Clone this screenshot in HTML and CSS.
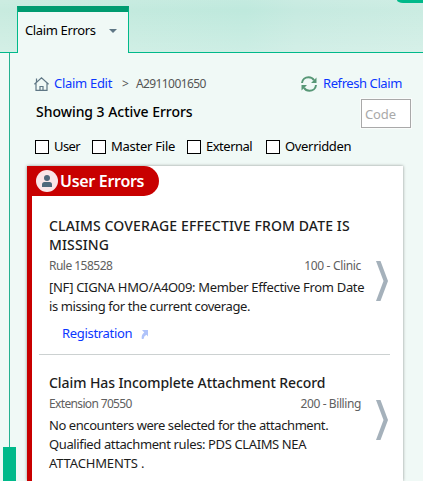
FILE: index.html
```html
<!DOCTYPE html>
<html lang="en">
<head>
<meta charset="utf-8">
<title>Claim Errors</title>
<link rel="stylesheet" href="styles.css">
</head>
<body>
<header class="tabs">
  <div class="tab"><span class="tab-label">Claim Errors</span><span class="caret"></span></div>
  <span class="corner"></span>
</header>
<div class="layout">
  <aside class="rail"><span class="rail-line"></span><span class="rail-thumb"></span></aside>
  <main class="main">
    <nav class="crumbs">
      <svg class="home" width="15" height="14" viewBox="0 0 15 14" fill="none" stroke="#5f7785" stroke-width="1.200"><path d="M.4 7.200 7.500.9l7.100 6.300M2 6v7.400h11V6M6 13.400V9.500h3v3.900M2.500 5V1.500"/></svg>
      <a class="link edit">Claim Edit</a>
      <span class="sep">&gt;</span>
      <span class="claim">A2911001650</span>
      <svg class="refresh" width="16" height="16" viewBox="0 0 16 16"><g fill="none" stroke="#579776" stroke-width="2"><path d="M1 7C1.300 3.300 4.300 1.200 7.500 1.200c2.400 0 4.400 1 5.500 3"/><path d="M15 9c-.3 3.700-3.300 5.800-6.500 5.800-2.400 0-4.400-1-5.500-3"/></g><path fill="#579776" d="M15.500 1.500V7H10zM.5 14.500V9H6z"/></svg>
      <a class="link reload">Refresh Claim</a>
    </nav>
    <div class="summary"><h1>Showing 3 Active Errors</h1><div class="code">Code</div></div>
    <div class="filters">
      <label><i class="box"></i><span class="f-user">User</span></label>
      <label><i class="box"></i><span class="f-master">Master File</span></label>
      <label><i class="box"></i><span class="f-external">External</span></label>
      <label><i class="box"></i><span class="f-over">Overridden</span></label>
    </div>
    <section class="card">
      <h2 class="pill">
        <svg width="22" height="22" viewBox="0 0 22 22"><circle cx="11" cy="11" r="11" fill="#fae6e8"/><circle cx="11" cy="8" r="3" fill="#4f687b"/><path fill="#4f687b" d="M6 17v-2.500q0-2.500 2.500-2.500h5q2.500 0 2.500 2.500V17z"/></svg>
        <span>User Errors</span>
      </h2>
      <article class="error first">
        <div class="text">
          <h3 class="t1">CLAIMS COVERAGE EFFECTIVE FROM DATE IS<br>MISSING</h3>
          <div class="meta"><span class="m1">Rule 158528</span><span class="m2">100 - Clinic</span></div>
          <p><span class="b1">[NF] CIGNA HMO/A4O09: Member Effective From Date</span><br><span class="b2">is missing for the current coverage.</span></p>
          <div class="action"><a class="link reg">Registration</a><svg class="jump" width="8" height="9" viewBox="0 0 8 9"><path d="M1 0h6v6.500L5.500 4.700Q3 5.500 2.500 9H.8Q0 4.700 3.300 2.500z" fill="#afc3fa"/></svg></div>
        </div>
        <svg class="chevron" width="13" height="40" viewBox="0 0 13 40"><path d="M0 0h4.500L12 20 4.500 40H0l7.500-20z" fill="#a5b1bb"/></svg>
      </article>
      <article class="error second">
        <div class="text">
          <h3 class="t2">Claim Has Incomplete Attachment Record</h3>
          <div class="meta"><span class="m3">Extension 70550</span><span class="m4">200 - Billing</span></div>
          <p><span class="b3">No encounters were selected for the attachment.</span><br><span class="b4">Qualified attachment rules: PDS CLAIMS NEA</span><br><span class="b5">ATTACHMENTS .</span></p>
        </div>
        <svg class="chevron" width="13" height="40" viewBox="0 0 13 40"><path d="M0 0h4.500L12 20 4.500 40H0l7.500-20z" fill="#a5b1bb"/></svg>
      </article>
    </section>
  </main>
</div>
</body>
</html>
```
FILE: styles.css
```css
* { box-sizing: border-box; }
body { margin: 0; width: 423px; height: 481px; overflow: hidden; background: #f0f9f6; color: #1c1c1c; font: 13px/19px "Noto Sans", sans-serif; white-space: nowrap; }
h1, h2, h3, p { margin: 0; }
svg { display: block; flex: none; }
.tabs { position: relative; height: 53px; padding: 6px 0 0 17px; border-bottom: 1px solid #00b98a; background: linear-gradient(90deg, #c8ebdf, #bfe9dd 58%, #c6eae0 70%, #cbece2); }
.tabs::before { content: ""; position: absolute; inset: 0; background: linear-gradient(rgba(255,255,255,.08), rgba(255,255,255,0) 20%, rgba(255,255,255,.22)); }
.tab { position: relative; display: flex; width: 112px; height: 47px; padding: 5px 0 0 7px; align-items: flex-start; border: 1px solid #00b98a; border-top: 6px solid #009b70; border-bottom: 0; background: #f0f9f6; color: #000; }
.tab-label { width: 84px; padding-top: 4px; letter-spacing: -.36px; }
.caret { margin-top: 12px; border: 4px solid transparent; border-top-color: #5f7785; border-bottom: 0; }
.corner { position: absolute; right: 0; top: 0; width: 26px; height: 3px; border-bottom-left-radius: 6px 3px; background: #00b98a; }
.layout { display: flex; height: 428px; }
.rail { position: relative; width: 27px; flex: none; }
.rail-line { display: block; margin-left: 9px; width: 1px; height: 394px; background: #26b191; }
.rail-thumb { display: block; margin-left: 3px; width: 13px; height: 34px; background: #00b98a; }
.main { width: 396px; padding-top: 20px; }
.link { color: #0b37ff; }
.crumbs { display: flex; height: 21px; padding: 0 0 1px 7px; align-items: center; }
.home { margin: 2px 5px 0 0; }
.edit { width: 68px; letter-spacing: -.3px; }
.sep { width: 14px; color: #555; font-size: 12px; }
.claim { width: 166px; color: #555; font-size: 12px; letter-spacing: -.6px; }
.refresh { margin: 1px 6px 0 -1px; }
.reload { letter-spacing: -.42px; }
.summary { display: flex; height: 41px; padding: 5px 12px 0 9px; justify-content: space-between; }
h1 { margin-top: 3px; color: #000; font-size: 14px; font-weight: 500; line-height: 19px; letter-spacing: -.04px; }
.code { width: 50px; height: 29px; padding: 5px 0 0 3px; border: 1px solid #a9a9a9; outline: 1px solid #fafcfb; background: #fff; color: #a9a9a9; letter-spacing: -.15px; }
.filters { display: grid; height: 31px; padding: 2px 0 0 8px; grid-template-columns: 57px 95px 79px 100px; color: #000; }
label { display: flex; height: 19px; align-items: center; }
.box { width: 14px; height: 14px; margin: 0 5px 0 0; border: 1px solid #000; background: #fff; }
.f-user { letter-spacing: -.6px; }
.f-master { letter-spacing: -.25px; }
.f-external { letter-spacing: -.5px; }
.f-over { letter-spacing: -.33px; }
.card { width: 376px; height: 315px; border-left: 5px solid #c80000; background: #fff; box-shadow: 0 0 3px rgba(0,0,0,.4); }
.pill { display: flex; width: 132px; height: 30px; margin-left: -5px; padding-left: 9px; gap: 2px; align-items: center; border-radius: 0 15px 15px 0; background: #c80000; color: #fff; font-size: 16px; font-weight: 600; letter-spacing: -.3px; }
.error { display: flex; margin: 0 13px 0 7px; padding-left: 10px; align-items: flex-start; }
.first { height: 159px; padding-top: 20px; border-bottom: 1px solid #ccd1d1; }
.second { padding-top: 18px; }
.text { width: 312px; margin-right: 15px; }
h3 { font-size: 14px; font-weight: 500; }
.meta { display: flex; margin-top: 2px; justify-content: space-between; color: #606060; font-size: 12px; }
p { margin-top: 3px; }
.action { display: flex; padding: 8px 0 0 13px; align-items: center; gap: 9px; }
.jump { margin-top: 2px; }
.chevron { margin-top: 45px; }
.second .chevron { margin-top: 27px; }
.t1 { letter-spacing: .13px; }
.t2 { letter-spacing: -.08px; }
.m1 { letter-spacing: -.52px; }
.m2 { letter-spacing: -.33px; }
.m3 { letter-spacing: -.65px; }
.m4 { letter-spacing: -.4px; }
.b1 { letter-spacing: -.33px; }
.b2 { letter-spacing: -.4px; }
.b3 { letter-spacing: -.43px; }
.b4 { letter-spacing: -.38px; }
.b5 { letter-spacing: -.15px; }
.reg { letter-spacing: -.32px; }
```
